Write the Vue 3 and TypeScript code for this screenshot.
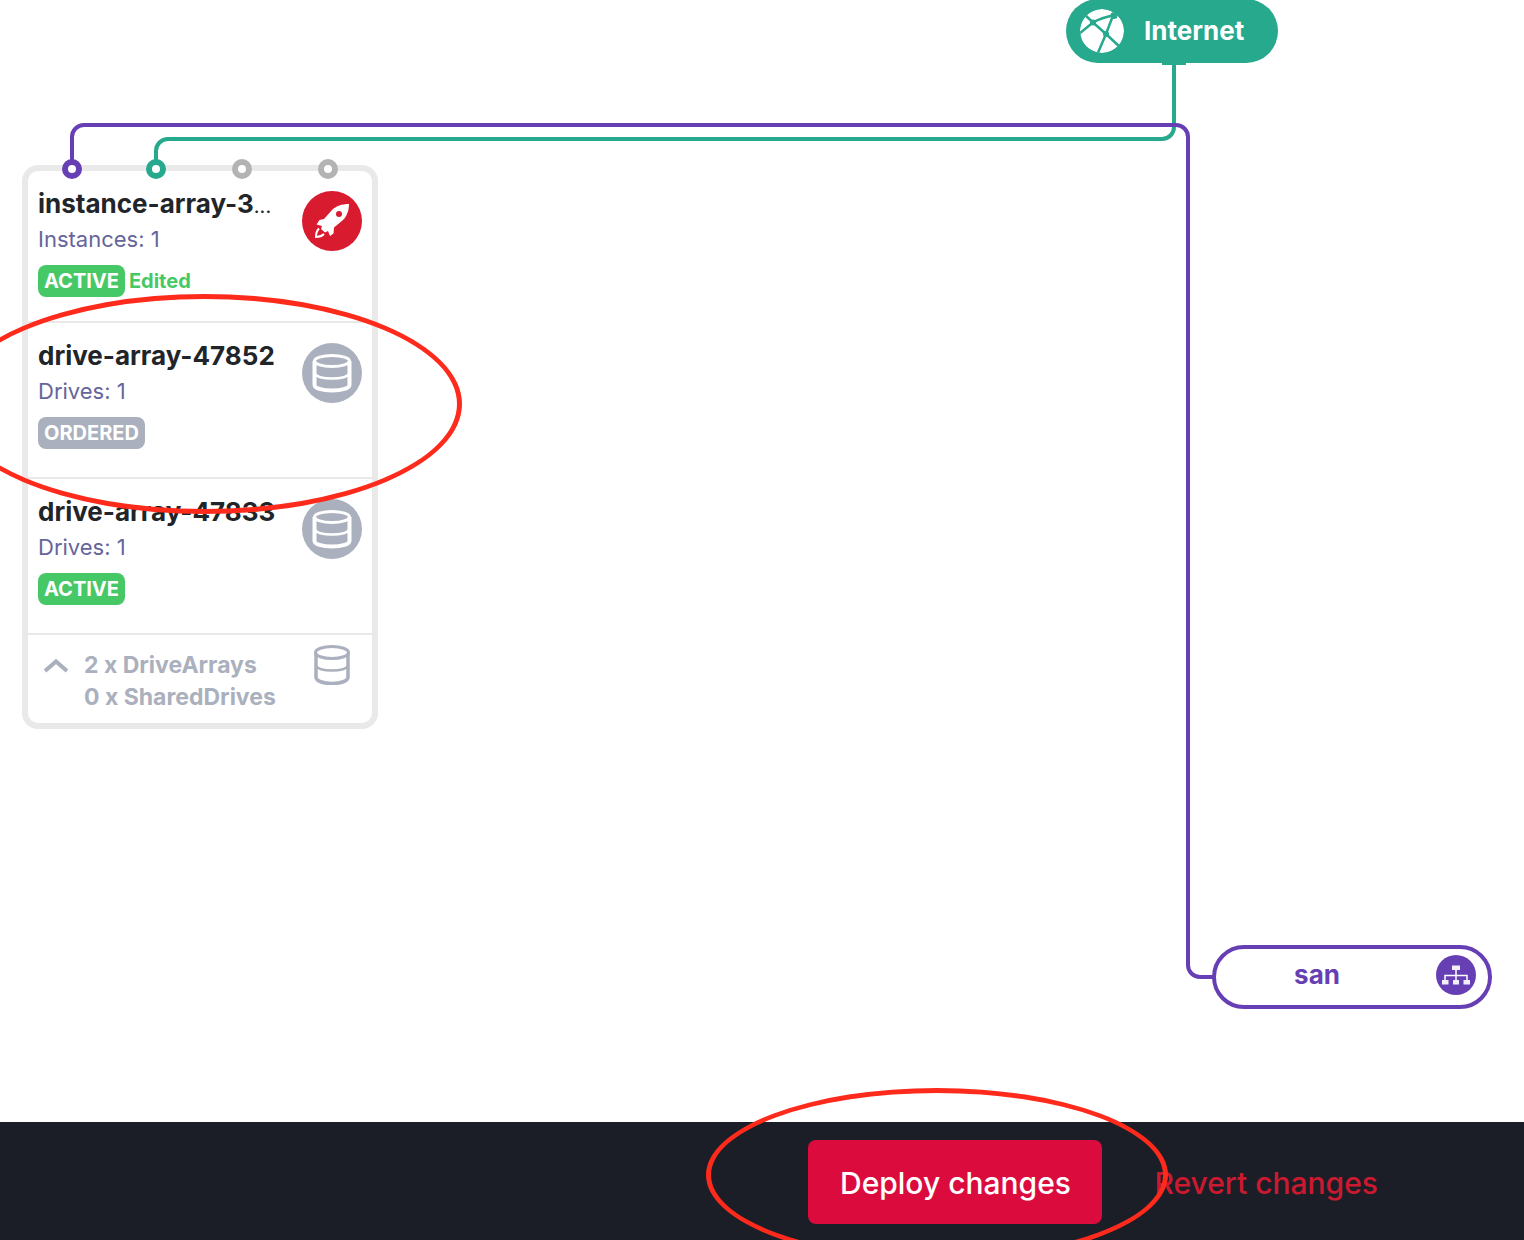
<script setup lang="ts">
interface ArrayRow {
  id: string
  name: string
  clipped: boolean
  detail: string
  status: 'ACTIVE' | 'ORDERED'
  edited: boolean
  kind: 'instance' | 'drive'
  highlighted: boolean
}

interface Port {
  x: number
  color: string
}

const rows: ArrayRow[] = [
  { id: 'i3', name: 'instance-array-3', clipped: true, detail: 'Instances: 1', status: 'ACTIVE', edited: true, kind: 'instance', highlighted: false },
  { id: 'd47852', name: 'drive-array-47852', clipped: false, detail: 'Drives: 1', status: 'ORDERED', edited: false, kind: 'drive', highlighted: true },
  { id: 'd47833', name: 'drive-array-47833', clipped: false, detail: 'Drives: 1', status: 'ACTIVE', edited: false, kind: 'drive', highlighted: false },
]

const ports: Port[] = [
  { x: 72, color: '#673fb4' },
  { x: 156, color: '#26a98c' },
  { x: 242, color: '#b3b3b3' },
  { x: 328, color: '#b3b3b3' },
]
</script>

<template>
  <div class="page">
    <main class="canvas">
      <section class="card">
        <ul class="rows">
          <li v-for="row in rows" :key="row.id" class="row" :class="row.kind">
            <div class="info">
              <h2 class="name">{{ row.name }}<span v-if="row.clipped" class="dots">...</span></h2>
              <p class="detail">{{ row.detail }}</p>
              <div class="state">
                <span class="badge" :class="row.status.toLowerCase()">{{ row.status }}</span>
                <span v-if="row.edited" class="edited">Edited</span>
              </div>
            </div>
            <svg v-if="row.kind === 'instance'" class="row-icon" viewBox="0 0 60 60" aria-hidden="true">
              <circle cx="30" cy="30" r="30" fill="#d81b2f" />
              <path d="M47 13C40 13 34 15 30 19L22 28L17.5 29L14.5 33.5L20 35L19 38L23 41.5L26 40L28 45L31.500 42.500L32 36.500L41 29C45 25 47 19 47 13Z" fill="#fff" />
              <circle cx="37" cy="23" r="3" fill="#d81b2f" />
              <path d="M17 37.500C14.500 40 14 43 14 46C17 46 20 45 22 43" fill="none" stroke="#fff" stroke-width="2" />
            </svg>
            <svg v-else class="row-icon" viewBox="0 0 60 60" aria-hidden="true">
              <circle cx="30" cy="30" r="30" fill="#aab0bd" />
              <g fill="none" stroke="#fff">
                <ellipse cx="30" cy="18" rx="17.500" ry="5.500" stroke-width="3" />
                <path d="M12.500 18V42C12.500 45 20 47.500 30 47.500S47.500 45 47.500 42V18" stroke-width="4" />
                <path d="M13 31C15 34 21 35.500 30 35.500S45 34 47 31" stroke-width="2.500" />
              </g>
            </svg>
            <span v-if="row.highlighted" class="ring ring-row" aria-hidden="true"></span>
          </li>
        </ul>
        <footer class="summary">
          <svg class="chevron" viewBox="0 0 24 16" aria-hidden="true">
            <path d="M1 14L12 4.500L23 14" fill="none" stroke="#aab0bd" stroke-width="4" />
          </svg>
          <p class="counts">2 x DriveArrays<br />0 x SharedDrives</p>
          <svg class="disk" viewBox="0 0 36 40" aria-hidden="true">
            <g fill="none" stroke="#aab0bd">
              <ellipse cx="18" cy="7.500" rx="16.500" ry="6" stroke-width="3" />
              <path d="M2 8V32C2 36 9 38.500 18 38.500S34 36 34 32V8" stroke-width="3.500" />
              <path d="M2 21C4 24 9 25.500 18 25.500S32 24 34 21" stroke-width="2.500" />
            </g>
          </svg>
        </footer>
      </section>

      <div class="node internet">
        <svg class="globe" viewBox="0 0 44 44" aria-hidden="true">
          <circle cx="22" cy="22" r="22" fill="#fff" />
          <g fill="none" stroke="#26a98c" stroke-width="2.500">
            <path d="M-1 25L13 13.500L4 5" />
            <path d="M13 13.500Q22 8.500 33 6.500L40 5" />
            <path d="M33 6.500L26 25L17 46" />
            <path d="M13 13.500L26 25L40 38" />
          </g>
          <g fill="#26a98c">
            <circle cx="13" cy="13.500" r="3" />
            <circle cx="34" cy="6.500" r="3.500" />
            <circle cx="26" cy="25" r="3" />
          </g>
        </svg>
        <span class="node-label">Internet</span>
      </div>

      <div class="node san">
        <span class="node-label">san</span>
        <svg class="lan" viewBox="0 0 40 40" aria-hidden="true">
          <circle cx="20" cy="20" r="20" fill="#673fb4" />
          <path d="M20 14V26M9 26V20.500H31V26" fill="none" stroke="#fff" stroke-width="1.500" />
          <path d="M16 10.500H24V15H16ZM6 25H12.500V29.500H6ZM17 25H23V29.500H17ZM27.500 25H34V29.500H27.500Z" fill="#f3effa" />
        </svg>
      </div>

      <svg class="wires" aria-hidden="true">
        <g fill="none" stroke-width="4">
          <path d="M1174 62V127A12 12 0 0 1 1162 139H168A12 12 0 0 0 156 151V162" stroke="#26a98c" />
          <path d="M72 162V137A12 12 0 0 1 84 125H1176A12 12 0 0 1 1188 137V965A12 12 0 0 0 1200 977H1214" stroke="#673fb4" />
        </g>
        <path d="M1162 61H1186V65H1162Z" fill="#26a98c" />
        <circle v-for="port in ports" :key="port.x" :cx="port.x" cy="169" r="7" fill="#fff" :stroke="port.color" stroke-width="6" />
      </svg>
    </main>

    <div class="actions">
      <div class="deploy-wrap">
        <button type="button" class="deploy">Deploy changes</button>
        <span class="ring ring-deploy" aria-hidden="true"></span>
      </div>
      <button type="button" class="revert">Revert changes</button>
    </div>
  </div>
</template>

<style>
body {
  margin: 0;
  background: #fff;
}
</style>

<style scoped>
.page {
  display: flex;
  flex-direction: column;
  min-height: 100vh;
  position: relative;
  overflow: hidden;
  font-family: Inter, "Liberation Sans", sans-serif;
  color: #212529;
}

.page * {
  box-sizing: border-box;
}

.canvas {
  flex: 1;
  position: relative;
  min-height: 1040px;
}

.wires {
  position: absolute;
  inset: 0;
  width: 100%;
  height: 100%;
  overflow: visible;
  pointer-events: none;
}

.card {
  position: absolute;
  left: 22px;
  top: 165px;
  width: 356px;
  border: 6px solid #e9e9e9;
  border-radius: 16px;
  background: #fff;
}

.rows {
  list-style: none;
  margin: 0;
  padding: 0;
}

.row {
  display: flex;
  justify-content: space-between;
  position: relative;
  padding: 16px 10px 28px;
  border-bottom: 2px solid #e9e9e9;
}

.row.instance {
  padding-bottom: 24px;
}

.name {
  margin: 0;
  font-size: 26px;
  line-height: 34px;
  font-weight: 700;
  white-space: nowrap;
}

.dots {
  font-size: 20px;
  line-height: 20px;
  font-weight: 400;
}

.detail {
  margin: 0;
  font-size: 22px;
  line-height: 36px;
  color: #65659b;
}

.state {
  display: flex;
  align-items: center;
  gap: 4px;
  margin-top: 8px;
}

.badge {
  padding: 0 6px;
  border-radius: 8px;
  font-size: 20px;
  line-height: 32px;
  font-weight: 700;
  color: #fff;
}

.badge.active {
  background: #47c866;
}

.badge.ordered {
  background: #aab0bd;
}

.edited {
  font-size: 20px;
  line-height: 32px;
  font-weight: 700;
  color: #47c866;
}

.row-icon {
  flex: none;
  width: 60px;
  height: 60px;
  margin-top: 4px;
}

.summary {
  display: flex;
  align-items: flex-start;
  padding: 10px 22px 10px 16px;
}

.chevron {
  width: 24px;
  height: 16px;
  margin-top: 12px;
}

.counts {
  flex: 1;
  margin: 4px 0 0 16px;
  font-size: 23px;
  line-height: 32px;
  font-weight: 700;
  color: #aab0bd;
  white-space: nowrap;
}

.disk {
  width: 36px;
  height: 40px;
}

.node {
  position: absolute;
  display: flex;
  align-items: center;
  height: 64px;
  border-radius: 32px;
  font-size: 26px;
  line-height: 32px;
  font-weight: 700;
}

.internet {
  left: 1066px;
  top: -1px;
  width: 212px;
  padding-left: 14px;
  gap: 20px;
  background: #26a98c;
  color: #fff;
}

.globe {
  width: 44px;
  height: 44px;
  border-radius: 50%;
}

.san {
  left: 1212px;
  top: 945px;
  width: 280px;
  padding: 0 12px 4px 0;
  gap: 18px;
  border: 4px solid #673fb4;
  background: #fff;
  color: #673fb4;
}

.san .node-label {
  flex: 1;
  text-align: center;
}

.lan {
  width: 40px;
  height: 40px;
}

.actions {
  display: flex;
  align-items: center;
  justify-content: flex-end;
  gap: 52px;
  padding: 18px 146px 16px 24px;
  background: #1b1e27;
}

.deploy-wrap {
  position: relative;
}

.deploy,
.revert {
  border: 0;
  padding: 2px 0 0;
  font-family: inherit;
  font-size: 30px;
  line-height: 40px;
  font-weight: 500;
  white-space: nowrap;
  cursor: pointer;
}

.deploy {
  display: block;
  width: 294px;
  height: 84px;
  border-radius: 8px;
  background: #dc0b3e;
  color: #fff;
}

.revert {
  background: none;
  color: #cb1a2f;
}

.ring {
  position: absolute;
  z-index: 2;
  border: 5px solid #fe2a1c;
  border-radius: 50%;
  pointer-events: none;
}

.ring-row {
  left: -81px;
  top: -29px;
  width: 515px;
  height: 220px;
}

.ring-deploy {
  left: -102px;
  top: -52px;
  width: 462px;
  height: 174px;
}
</style>
